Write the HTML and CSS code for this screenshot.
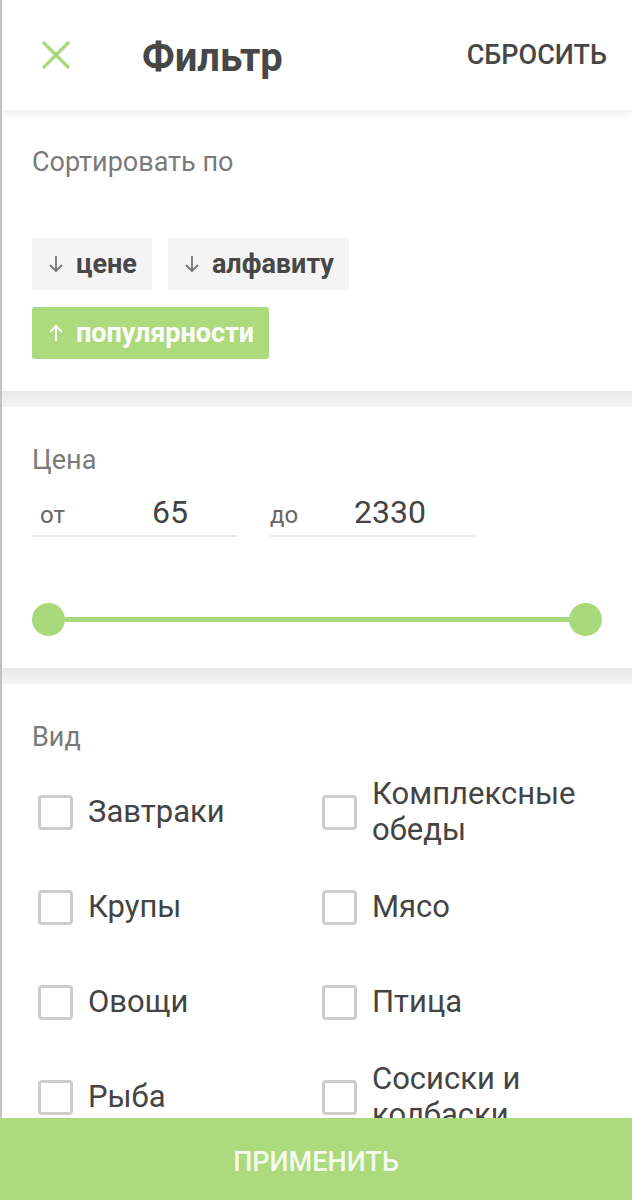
FILE: index.html
```html
<!DOCTYPE html>
<html lang="ru">
<head>
  <meta charset="UTF-8" />
  <meta name="viewport" content="width=device-width, initial-scale=1.0"/>
  <title>Фильтр</title>
  <link rel="stylesheet" href="styles.css">
</head>
<body>
  <header class="topbar">
    <button class="close" aria-label="Закрыть">
      <svg width="28" height="28" viewBox="0 0 28 28"><path d="M2 2 L26 26 M26 2 L2 26" stroke="#a8d87a" stroke-width="3.2" stroke-linecap="round"/></svg>
    </button>
    <h1 class="title">Фильтр</h1>
    <button class="reset">СБРОСИТЬ</button>
  </header>

  <section class="section sort">
    <div class="section-title">Сортировать по</div>
    <div class="chips">
      <button class="chip">
        <svg width="16" height="18" viewBox="0 0 16 18"><path d="M8 1 V16 M2 10 L8 16 L14 10" fill="none" stroke="#777" stroke-width="1.8"/></svg>
        цене
      </button>
      <button class="chip">
        <svg width="16" height="18" viewBox="0 0 16 18"><path d="M8 1 V16 M2 10 L8 16 L14 10" fill="none" stroke="#777" stroke-width="1.8"/></svg>
        алфавиту
      </button>
      <button class="chip active">
        <svg width="16" height="18" viewBox="0 0 16 18"><path d="M8 17 V2 M2 8 L8 2 L14 8" fill="none" stroke="#fff" stroke-width="1.8"/></svg>
        популярности
      </button>
    </div>
  </section>

  <div class="divider"></div>

  <section class="section price">
    <div class="section-title">Цена</div>
    <div class="price-row">
      <label class="price-field"><span class="prefix">от</span><span class="value">65</span></label>
      <label class="price-field"><span class="prefix">до</span><span class="value">2330</span></label>
    </div>
    <div class="slider">
      <span class="thumb"></span>
      <span class="track"></span>
      <span class="thumb"></span>
    </div>
  </section>

  <div class="divider"></div>

  <section class="section kinds">
    <div class="section-title">Вид</div>
    <div class="checks">
      <label class="check"><span class="box"></span><span class="label">Завтраки</span></label>
      <label class="check"><span class="box"></span><span class="label">Комплексные обеды</span></label>
      <label class="check"><span class="box"></span><span class="label">Крупы</span></label>
      <label class="check"><span class="box"></span><span class="label">Мясо</span></label>
      <label class="check"><span class="box"></span><span class="label">Овощи</span></label>
      <label class="check"><span class="box"></span><span class="label">Птица</span></label>
      <label class="check"><span class="box"></span><span class="label">Рыба</span></label>
      <label class="check"><span class="box"></span><span class="label">Сосиски и колбаски</span></label>
    </div>
  </section>

  <button class="apply">ПРИМЕНИТЬ</button>
</body>
</html>
```

FILE: styles.css
```css
* {
  box-sizing: border-box;
}

body {
  margin: 0;
  font-family: Roboto, 'Noto Sans', sans-serif;
  color: #444;
  background: #fff;
  border-left: 2px solid #c2c2c2;
  min-height: 1200px;
  overflow: hidden;
}

button {
  font-family: inherit;
  border: none;
  background: none;
  padding: 0;
  cursor: pointer;
}

.topbar {
  position: relative;
  z-index: 2;
  height: 110px;
  display: flex;
  align-items: center;
  padding: 0 25px 0 40px;
  background: #fff;
  box-shadow: 0 3px 8px rgba(0, 0, 0, 0.08);
}

.close {
  display: flex;
  width: 28px;
  height: 28px;
}

.title {
  margin: 4px 0 0 72px;
  font-size: 40px;
  font-weight: 700;
  color: #474747;
  flex: 1;
}

.reset {
  font-size: 27px;
  font-weight: 500;
  color: #474747;
}

.section {
  background: #fff;
  padding: 34px 30px 32px;
}

.section-title {
  font-size: 27px;
  line-height: 36px;
  color: #7a7a7a;
}

.divider {
  height: 16px;
  background: linear-gradient(#e8e8e8, #f4f4f4);
}

/* sort chips */
.chips {
  display: flex;
  flex-wrap: wrap;
  gap: 17px 16px;
  margin-top: 58px;
  width: 340px;
}

.chip {
  height: 52px;
  display: flex;
  align-items: center;
  gap: 12px;
  padding: 0 15px 0 16px;
  border-radius: 3px;
  background: #f4f4f4;
  font-size: 27px;
  font-weight: 700;
  color: #474747;
}

.chip.active {
  background: #acda7c;
  color: #fff;
}

/* price */
.price {
  padding-top: 35px;
}

.price-row {
  display: flex;
  gap: 32px;
  margin-top: 11px;
}

.price-field {
  width: 206px;
  height: 48px;
  display: flex;
  align-items: center;
  border-bottom: 2px solid #ececec;
  padding-left: 8px;
}

.prefix {
  font-size: 24px;
  color: #666;
  width: 112px;
  padding-top: 6px;
}

.price-field + .price-field {
  padding-left: 0;
}

.price-field + .price-field .prefix {
  width: 84px;
}

.value {
  font-size: 32px;
  color: #444;
}

.slider {
  display: flex;
  align-items: center;
  margin-top: 66px;
}

.thumb {
  width: 33px;
  height: 33px;
  border-radius: 50%;
  background: #a8d97a;
  flex: none;
}

.track {
  flex: 1;
  height: 5px;
  background: #a8d97a;
}

/* kinds */
.kinds {
  padding: 35px 10px 120px 36px;
}

.kinds .section-title {
  margin-left: -6px;
}

.checks {
  display: grid;
  grid-template-columns: 284px 1fr;
  grid-auto-rows: 72px;
  row-gap: 23px;
  margin-top: 21px;
}

.check {
  display: flex;
  align-items: center;
  gap: 15px;
}

.box {
  flex: none;
  width: 35px;
  height: 35px;
  border: 3px solid #cdcdcd;
  border-radius: 4px;
}

.label {
  font-size: 31px;
  line-height: 36px;
  color: #444;
  max-width: 240px;
}

.apply {
  position: fixed;
  left: 0;
  right: 0;
  bottom: 0;
  height: 82px;
  padding-top: 6px;
  background: #acda7c;
  color: #f4fbee;
  font-size: 27px;
  font-weight: 500;
}
```
